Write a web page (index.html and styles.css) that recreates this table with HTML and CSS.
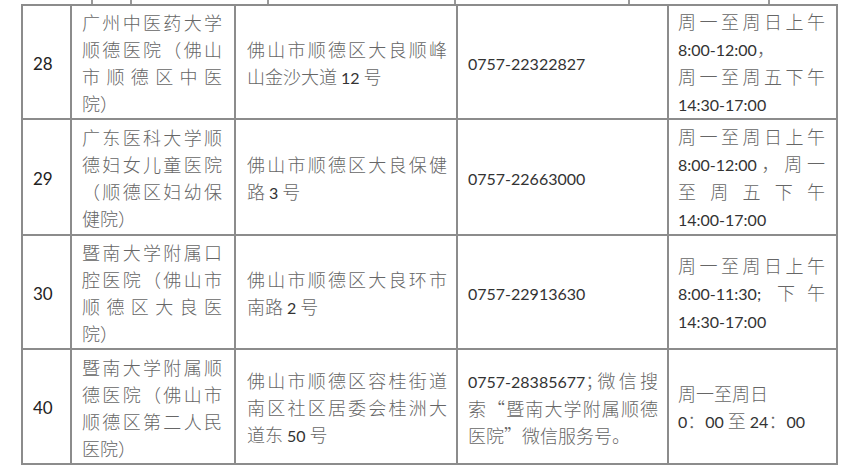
FILE: index.html
```html
<!DOCTYPE html>
<html lang="zh-CN">
<head>
<meta charset="utf-8">
<title>医院列表</title>
<link rel="stylesheet" href="styles.css">
</head>
<body>
<div class="strip">
  <div class="sc s1"></div>
  <div class="sc s2"></div>
  <div class="sc s3"></div>
  <div class="sc s4"></div>
  <div class="sc s5"></div>
</div>
<div class="grid">
  <!-- row 28 -->
  <div class="cell c1 r1"><span class="n">28</span></div>
  <div class="cell c2 r1">
    <div class="j">广州中医药大学</div>
    <div class="j">顺德医院（佛山</div>
    <div class="j">市顺德区中医</div>
    <div>院）</div>
  </div>
  <div class="cell c3 r1">
    <div class="j">佛山市顺德区大良顺峰</div>
    <div>山金沙大道<span class="n sp">12</span>号</div>
  </div>
  <div class="cell c4 r1"><span class="n">0757-22322827</span></div>
  <div class="cell c5 r1">
    <div class="j">周一至周日上午</div>
    <div><span class="n">8:00-12:00</span>，</div>
    <div class="j">周一至周五下午</div>
    <div><span class="n">14:30-17:00</span></div>
  </div>

  <!-- row 29 -->
  <div class="cell c1 r2"><span class="n">29</span></div>
  <div class="cell c2 r2">
    <div class="j">广东医科大学顺</div>
    <div class="j">德妇女儿童医院</div>
    <div class="j">（顺德区妇幼保</div>
    <div>健院）</div>
  </div>
  <div class="cell c3 r2">
    <div class="j">佛山市顺德区大良保健</div>
    <div>路<span class="n sp">3</span>号</div>
  </div>
  <div class="cell c4 r2"><span class="n">0757-22663000</span></div>
  <div class="cell c5 r2">
    <div class="j">周一至周日上午</div>
    <div class="j"><span class="n">8:00-12:00</span>，周一</div>
    <div class="j">至周五下午</div>
    <div><span class="n">14:00-17:00</span></div>
  </div>

  <!-- row 30 -->
  <div class="cell c1 r3"><span class="n">30</span></div>
  <div class="cell c2 r3">
    <div class="j">暨南大学附属口</div>
    <div class="j">腔医院（佛山市</div>
    <div class="j">顺德区大良医</div>
    <div>院）</div>
  </div>
  <div class="cell c3 r3">
    <div class="j">佛山市顺德区大良环市</div>
    <div>南路<span class="n sp">2</span>号</div>
  </div>
  <div class="cell c4 r3"><span class="n">0757-22913630</span></div>
  <div class="cell c5 r3">
    <div class="j">周一至周日上午</div>
    <div class="j"><span class="n">8:00-11:30;</span> 下午</div>
    <div><span class="n">14:30-17:00</span></div>
  </div>

  <!-- row 40 -->
  <div class="cell c1 r4"><span class="n">40</span></div>
  <div class="cell c2 r4">
    <div class="j">暨南大学附属顺</div>
    <div class="j">德医院（佛山市</div>
    <div class="j">顺德区第二人民</div>
    <div>医院）</div>
  </div>
  <div class="cell c3 r4">
    <div class="j">佛山市顺德区容桂街道</div>
    <div class="j">南区社区居委会桂洲大</div>
    <div>道东<span class="n sp">50</span>号</div>
  </div>
  <div class="cell c4 r4">
    <div class="j"><span class="n">0757-28385677</span><span class="hp">；</span>微信搜</div>
    <div class="j">索“暨南大学附属顺德</div>
    <div>医院”微信服务号。</div>
  </div>
  <div class="cell c5 r4">
    <div>周一至周日</div>
    <div><span class="n">0</span>：<span class="n">00</span> 至 <span class="n">24</span>：<span class="n">00</span></div>
  </div>
</div>
</body>
</html>
```

FILE: styles.css
```css
html, body {
  margin: 0;
  padding: 0;
  background: #ffffff;
}

body {
  width: 843px;
  height: 470px;
  overflow: hidden;
  font-family: "Noto Sans CJK SC", "Noto Sans", sans-serif;
  font-size: 18px;
  font-weight: 300;
  color: #666666;
}

.strip {
  display: flex;
  margin-left: 91px;
  height: 4px;
}

.sc {
  box-sizing: border-box;
  height: 4px;
  border-right: 2px solid #9a9a9a;
}

.s1 { width: 41px; border-left: 2px solid #9a9a9a; }
.s2 { width: 137px; }
.s3 { width: 187px; }
.s4 { width: 174px; }
.s5 { width: 140px; }

.grid {
  display: grid;
  grid-template-columns: 49px 164px 222px 211px 169px;
  grid-template-rows: 114px 116px 114px 115px;
  margin-left: 21px;
  width: 817px;
  box-sizing: border-box;
  border-left: 2px solid #8c8c8c;
  border-top: 2px solid #8c8c8c;
}

.cell {
  box-sizing: border-box;
  border-right: 2px solid #8c8c8c;
  border-bottom: 2px solid #8c8c8c;
  display: flex;
  flex-direction: column;
  justify-content: center;
  line-height: 27px;
  padding-top: 2px;
}

.c1 { padding-left: 10px; padding-right: 4px; }
.c2 { padding-left: 10px; padding-right: 12px; }
.c3 { padding-left: 11px; padding-right: 9px; }
.c4 { padding-left: 10px; padding-right: 9px; }
.c5 { padding-left: 9px; padding-right: 11px; }

.j {
  white-space: nowrap;
  text-align: justify;
  text-align-last: justify;
}

.n {
  font-family: Lato, "Liberation Sans", sans-serif;
  font-size: 16px;
  font-weight: 400;
  color: #333333;
}

.c1 .n {
  font-size: 17px;
  color: #222222;
}

.sp {
  margin: 0 4px;
}

.hp {
  font-feature-settings: "halt";
}
```
